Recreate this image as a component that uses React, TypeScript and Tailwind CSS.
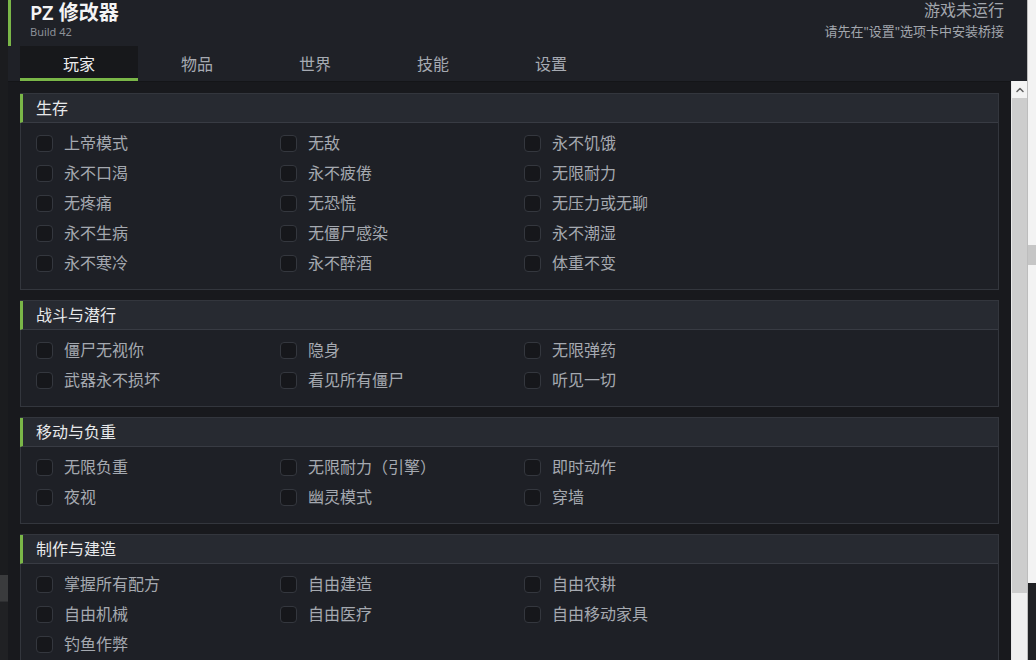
import {Check, ChevronUp} from "lucide-react";

const tabs = ["玩家", "物品", "世界", "技能", "设置"];

const sections: {title: string; items: string[]}[] = [
    {
        title: "生存",
        items: [
            "上帝模式", "无敌", "永不饥饿",
            "永不口渴", "永不疲倦", "无限耐力",
            "无疼痛", "无恐慌", "无压力或无聊",
            "永不生病", "无僵尸感染", "永不潮湿",
            "永不寒冷", "永不醉酒", "体重不变",
        ],
    },
    {
        title: "战斗与潜行",
        items: ["僵尸无视你", "隐身", "无限弹药", "武器永不损坏", "看见所有僵尸", "听见一切"],
    },
    {
        title: "移动与负重",
        items: ["无限负重", "无限耐力（引擎）", "即时动作", "夜视", "幽灵模式", "穿墙"],
    },
    {
        title: "制作与建造",
        items: ["掌握所有配方", "自由建造", "自由农耕", "自由机械", "自由医疗", "自由移动家具", "钓鱼作弊"],
    },
];

const font = {fontFamily: '"Noto Sans", "Noto Sans CJK SC", sans-serif'};

const Toggle = ({label, checked = false}: {label: string; checked?: boolean}) => (
    <label className="flex items-center h-[30px] cursor-pointer select-none">
        <span
            className="w-[17px] h-[17px] rounded-[4px] border border-[#34373e] bg-[#16171b] flex items-center justify-center">
            {checked && <Check size={12} className="text-[#7ab648]"/>}
        </span>
        <span className="ml-[11px] text-[16px] leading-none text-[#a5a9b0]">{label}</span>
    </label>
);

const Section = ({title, items}: {title: string; items: string[]}) => (
    <div className="border border-[#33363d] bg-[#1e2026]">
        <div className="h-[29px] flex items-center border-b border-[#383b43] bg-[#272a31] border-l-[3px] border-l-[#7ab648] -ml-px pl-[13px]">
            <span className="text-[16px] leading-none text-[#e8e9eb]">{title}</span>
        </div>
        <div className="grid grid-cols-[244px_244px_244px] pl-[15px] pt-[5px] pb-[11px]">
            {items.map(item => <Toggle key={item} label={item}/>)}
        </div>
    </div>
);

const App = () => {
    return (
        <div className="w-[1036px] h-[660px] flex overflow-hidden bg-[#1c1d20]" style={font}>
            {/* window behind, left edge */}
            <div className="w-[8px] flex flex-col shrink-0">
                <div className="h-[575px] bg-[#1b1c1f]"/>
                <div className="h-[26px] bg-[#3a3b3d]"/>
                <div className="flex-1 bg-[#202124] border-t border-[#2e2f32]"/>
            </div>

            {/* main window */}
            <div className="w-[1019px] flex flex-col shrink-0">
                <div className="bg-[#1f2127]">
                    <div className="flex justify-between">
                        <div className="h-[46px] border-l-[3px] border-[#7ab648] pl-[19px]">
                            <div className="text-[20px] leading-[24px] font-semibold text-[#f4f4f5] pt-[1px]">PZ 修改器</div>
                            <div className="text-[11px] leading-[13px] text-[#8b9098]">Build 42</div>
                        </div>
                        <div className="flex flex-col items-end pr-[23px] pt-[1px]">
                            <div className="text-[16px] leading-[18px] text-[#a2a6ad]">游戏未运行</div>
                            <div className="text-[13px] leading-[16px] mt-[4px] text-[#a2a6ad]">请先在"设置"选项卡中安装桥接</div>
                        </div>
                    </div>
                    <div className="flex pl-[12px] h-[35px]">
                        {tabs.map((tab, i) => (
                            <div
                                key={tab}
                                className={
                                    i === 0
                                        ? "w-[118px] flex items-center justify-center bg-[#17181b] border-b-[3px] border-[#7ab648] text-[16px] text-[#ececee] pt-[3px]"
                                        : "w-[118px] flex items-center justify-center border-b-[3px] border-transparent text-[16px] text-[#a6aab2] pt-[3px]"
                                }
                            >
                                {tab}
                            </div>
                        ))}
                    </div>
                </div>

                <div className="flex-1 flex min-h-0">
                    <div className="w-[1003px] bg-[#18191d] border-t border-[#141518] px-[12px] pt-[11px] flex flex-col gap-[10px] overflow-hidden">
                        {sections.map(s => <Section key={s.title} title={s.title} items={s.items}/>)}
                    </div>
                    <div className="w-[16px] flex flex-col bg-[#f0f0f0] border-l border-[#e8e8e8]">
                        <div className="h-[17px] flex items-center justify-center bg-[#f3f3f3]">
                            <ChevronUp size={12} strokeWidth={3} className="text-[#606060]"/>
                        </div>
                        <div className="h-[495px] bg-[#cdcdcd]"/>
                        <div className="flex-1 bg-[#efefef]"/>
                    </div>
                </div>
            </div>

            {/* desktop behind, right edge */}
            <div className="flex-1 flex flex-col border-l border-[#bdbdbd]">
                <div className="h-[245px] bg-[#f3f3f3]"/>
                <div className="h-[20px] bg-[#c6c6c6]"/>
                <div className="h-[318px] bg-[#f3f3f3]"/>
                <div className="flex-1 bg-[#202124]"/>
            </div>
        </div>
    );
};

export default App;
